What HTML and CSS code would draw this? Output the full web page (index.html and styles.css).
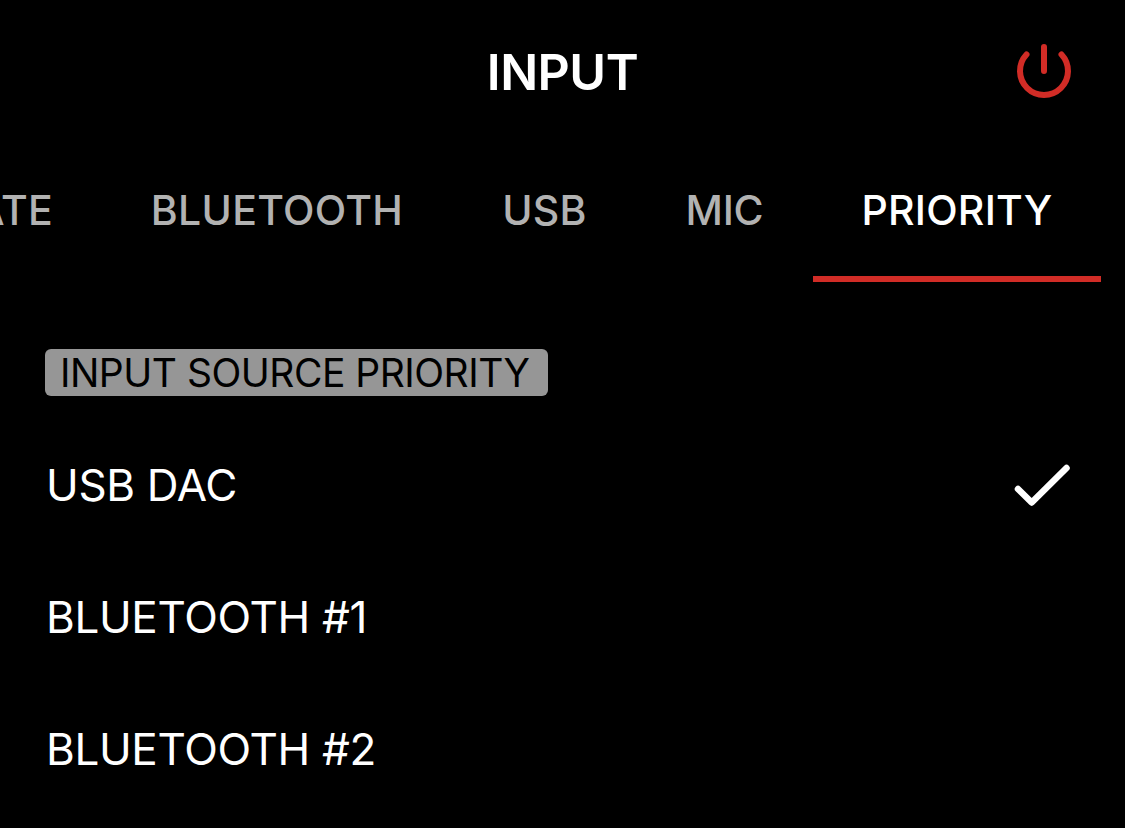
FILE: index.html
```html
<!DOCTYPE html>
<html lang="en">
<head>
    <meta charset="UTF-8">
    <meta name="viewport" content="width=device-width, initial-scale=1.0">
    <title>Input</title>
    <link rel="stylesheet" href="styles.css">
</head>
<body>
    <header class="header">
        <h1>INPUT</h1>
        <button class="power" aria-label="Power">
            <svg width="60" height="60" viewBox="0 0 60 60">
                <path d="M12.5 13.5A24 24 0 1 0 47.5 13.5M30 6V30" />
            </svg>
        </button>
    </header>

    <nav class="tabs">
        <a class="tab">RATE</a>
        <a class="tab bluetooth">BLUETOOTH</a>
        <a class="tab usb">USB</a>
        <a class="tab mic">MIC</a>
        <a class="tab priority active">PRIORITY</a>
    </nav>

    <main>
        <h2>INPUT SOURCE PRIORITY</h2>
        <ul class="sources">
            <li>
                <span>USB DAC</span>
                <svg class="check" width="60" height="48" viewBox="0 0 60 48">
                    <path d="M6 28L19.7 41.5L54.5 7" />
                </svg>
            </li>
            <li><span>BLUETOOTH #1</span></li>
            <li><span>BLUETOOTH #2</span></li>
        </ul>
    </main>
</body>
</html>
```

FILE: styles.css
```css
body {
    font-family: 'Inter', sans-serif;
    background-color: #000;
    color: #fff;
    margin: 0;
    height: 828px;
    overflow: hidden;
}

.header {
    display: grid;
    grid-template-columns: 1fr auto 1fr;
    align-items: center;
    height: 142px;
    padding: 0 51px;
}

h1 {
    grid-column: 2;
    margin: 0;
    padding-top: 2px;
    font-size: 50px;
    line-height: 60px;
    font-weight: 600;
    letter-spacing: -0.5px;
}

.power {
    justify-self: end;
    height: 60px;
    padding: 0;
    border: none;
    background: none;
}

svg {
    display: block;
    fill: none;
    stroke-linecap: round;
    stroke-linejoin: round;
}

.power svg {
    stroke: #d12c26;
    stroke-width: 6;
}

/* scrolled to the last tab */
.tabs {
    display: flex;
    justify-content: flex-end;
    height: 140px;
    padding-right: 24px;
    overflow: hidden;
}

.tab {
    flex-shrink: 0;
    box-sizing: border-box;
    padding: 0 48px;
    border-bottom: 6px solid transparent;
    color: #b2b2b2;
    font-size: 41px;
    line-height: 137px;
    font-weight: 500;
    letter-spacing: 0.2px;
    text-align: center;
    white-space: nowrap;
}

.bluetooth {
    width: 352px;
    letter-spacing: 0.3px;
}

.usb {
    width: 184px;
    padding-right: 49px;
}

.mic {
    width: 176px;
    padding-right: 49px;
    letter-spacing: -0.3px;
}

.priority {
    width: 288px;
}

.tab.active {
    color: #fff;
    border-bottom-color: #d12c26;
}

main {
    padding: 67px 53px 0 45px;
}

h2 {
    width: 503px;
    box-sizing: border-box;
    margin: 0;
    padding-left: 15px;
    border-radius: 6px;
    background-color: #969696;
    color: #000;
    font-size: 39px;
    line-height: 47px;
    font-weight: 400;
    letter-spacing: -0.5px;
    white-space: nowrap;
}

.sources {
    list-style: none;
    margin: 0;
    padding: 23px 0 0 1px;
}

.sources li {
    display: flex;
    justify-content: space-between;
    align-items: center;
    height: 132px;
    font-size: 44px;
    letter-spacing: -0.35px;
}

.check {
    stroke: #fff;
    stroke-width: 6.5;
}
```
